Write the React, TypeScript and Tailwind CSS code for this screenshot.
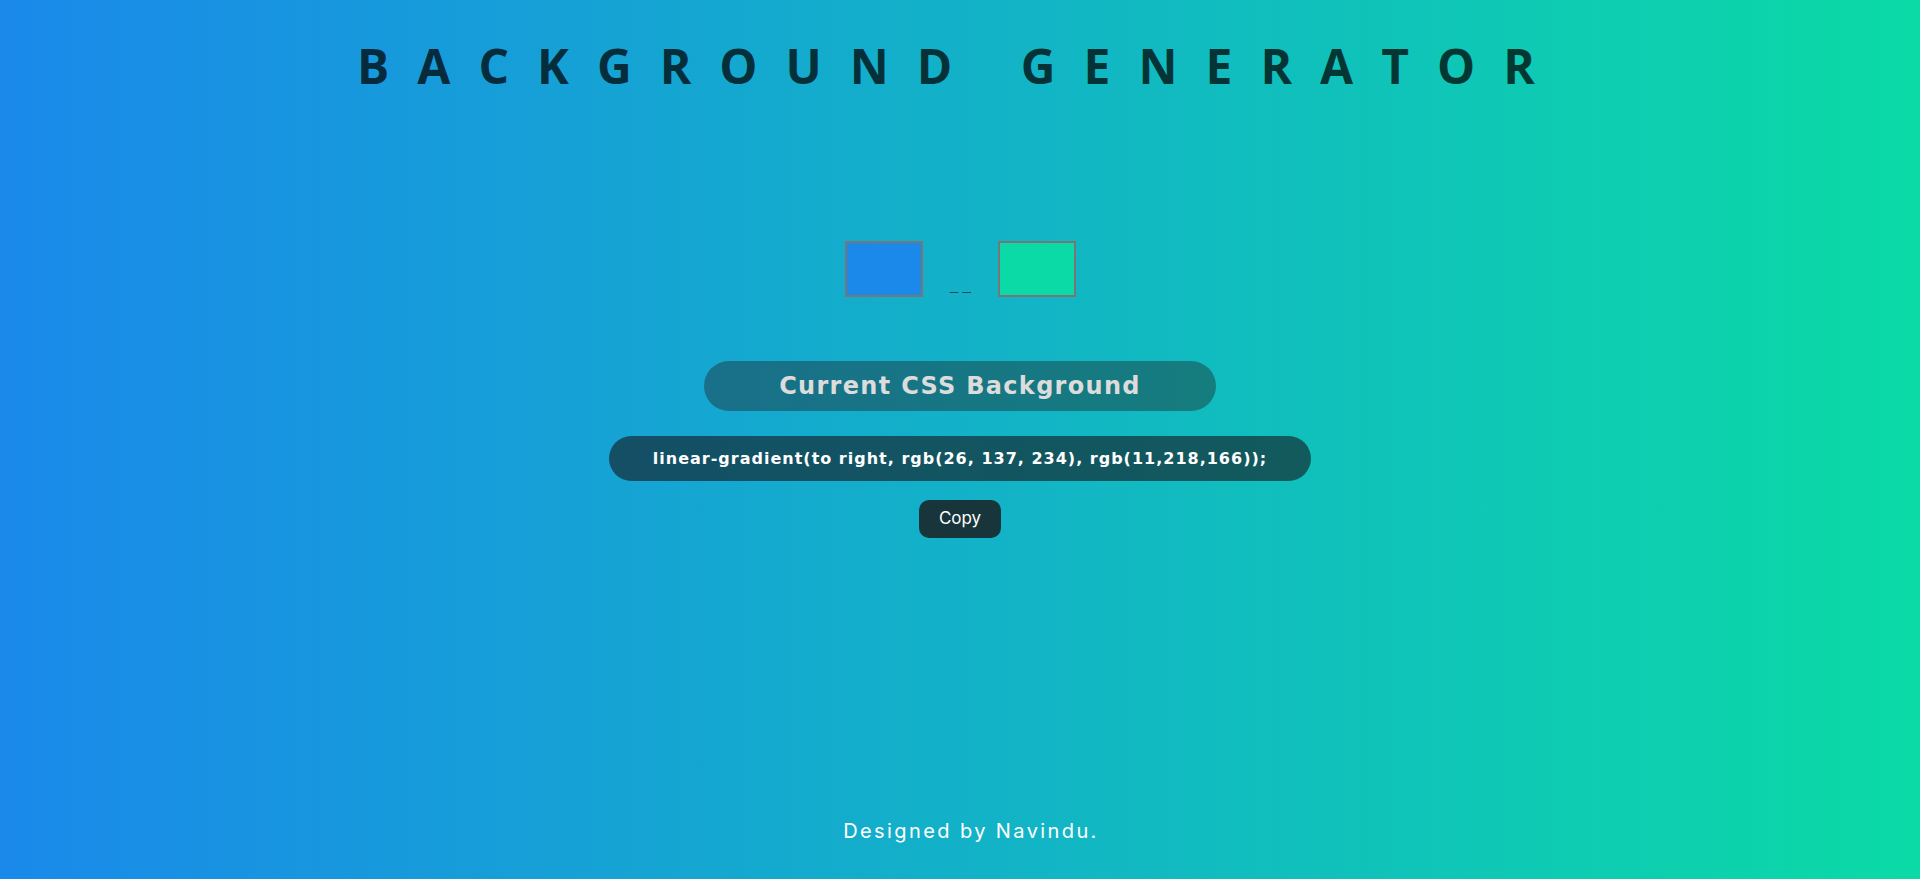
import { useState } from 'react';

const App = () => {
  const [color1] = useState('#1a89ea');
  const [color2] = useState('#0bdaa6');
  const css = 'linear-gradient(to right, rgb(26, 137, 234), rgb(11,218,166));';

  return (
    <div className="min-h-screen h-screen flex flex-col items-center bg-[linear-gradient(to_right,rgb(26,137,234),rgb(11,218,166))] font-['Inter',sans-serif]">
      {/* Title */}
      <h1 className="mt-[42px] text-[48px] leading-[48px] font-bold tracking-[28px] text-[rgba(0,0,0,0.72)] font-['Open_Sans',sans-serif] whitespace-nowrap">
        BACKGROUND GENERATOR
      </h1>

      {/* Color pickers */}
      <div className="mt-[151px] flex items-end gap-[27px] ml-[1px]">
        <div className="w-[78px] h-[56px] border-2 border-[#777]" style={{ backgroundColor: color1 }} />
        <span className="mb-[5px] text-[15px] leading-[15px] text-[#1c4a5a] font-['Liberation_Sans',sans-serif] whitespace-pre">_ _</span>
        <div className="w-[78px] h-[56px] border-2 border-[#777]" style={{ backgroundColor: color2 }} />
      </div>

      {/* Current CSS */}
      <div className="mt-[64px] w-[512px] h-[50px] rounded-full bg-[rgba(30,30,30,0.4)] flex items-center justify-center">
        <h3 className="text-[24px] font-bold tracking-[1.3px] text-[#dcdcdc] font-['DejaVu_Sans',sans-serif]">Current CSS Background</h3>
      </div>

      <div className="mt-[25px] w-[702px] h-[45px] rounded-full bg-[rgba(20,28,34,0.62)] flex items-center justify-center">
        <p className="text-[16px] font-bold tracking-[1px] text-white whitespace-nowrap font-['DejaVu_Sans',sans-serif]">{css}</p>
      </div>

      <button className="mt-[19px] w-[82px] h-[38px] rounded-[10px] bg-[#18353b] text-white text-[17px]">
        Copy
      </button>

      {/* Footer */}
      <p className="mt-auto mb-[33px] ml-[22px] text-[20px] leading-[30px] tracking-[2.4px] text-white">
        Designed by Navindu.
      </p>
    </div>
  );
};

export default App;
